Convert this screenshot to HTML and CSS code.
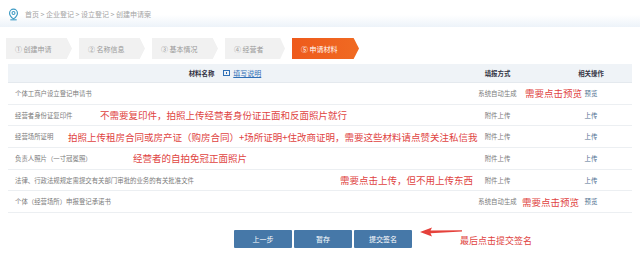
FILE: index.html
```html
<!DOCTYPE html>
<html lang="zh">
<head>
<meta charset="utf-8">
<link rel="stylesheet" href="styles.css">
</head>
<body>
<div class="crumb">
  <svg class="pin" viewBox="0 0 12 14" width="11" height="13"><path d="M6 1.2a4.3 4.3 0 0 0-4.3 4.3c0 3 4.3 6.3 4.3 6.3s4.3-3.3 4.3-6.3A4.3 4.3 0 0 0 6 1.2z" fill="none" stroke="#3f9bc4" stroke-width="1.3"/><circle cx="6" cy="5.4" r="1.6" fill="none" stroke="#3f9bc4" stroke-width="1.2"/><path d="M2.5 12.8h7" stroke="#3f9bc4" stroke-width="1.2"/></svg>
  <span>首页 &gt; 企业登记 &gt; 设立登记 &gt; 创建申请案</span>
</div>

<div class="steps">
  <div class="step">① 创建申请</div>
  <div class="step">② 名称信息</div>
  <div class="step">③ 基本情况</div>
  <div class="step short">④ 经营者</div>
  <div class="step active">⑤ 申请材料</div>
</div>

<div class="table">
  <div class="row head">
    <div class="c1"><b>材料名称</b><a class="help"><span class="hicon"></span>填写说明</a></div>
    <div class="c2"><b>填报方式</b></div>
    <div class="c3"><b>相关操作</b></div>
  </div>
  <div class="row">
    <div class="c1">个体工商户设立登记申请书</div>
    <div class="c2">系统自动生成</div>
    <div class="c3 op">预览</div>
    <span class="note n1">需要点击预览</span>
  </div>
  <div class="row">
    <div class="c1">经营者身份证复印件</div>
    <div class="c2">附件上传</div>
    <div class="c3 op">上传</div>
    <span class="note n2">不需要复印件，拍照上传经营者身份证正面和反面照片就行</span>
  </div>
  <div class="row">
    <div class="c1">经营场所证明</div>
    <div class="c2">附件上传</div>
    <div class="c3 op">上传</div>
    <span class="note n3">拍照上传租房合同或房产证（购房合同）+场所证明+住改商证明，需要这些材料请点赞关注私信我</span>
  </div>
  <div class="row">
    <div class="c1">负责人照片（一寸冠冕照）</div>
    <div class="c2">附件上传</div>
    <div class="c3 op">上传</div>
    <span class="note n4">经营者的自拍免冠正面照片</span>
  </div>
  <div class="row">
    <div class="c1">法律、行政法规规定需提交有关部门审批的业务的有关批准文件</div>
    <div class="c2">附件上传</div>
    <div class="c3 op">上传</div>
    <span class="note n5">需要点击上传，但不用上传东西</span>
  </div>
  <div class="row">
    <div class="c1">个体（经营场所）申报登记承诺书</div>
    <div class="c2">系统自动生成</div>
    <div class="c3 op">预览</div>
    <span class="note n6">需要点击预览</span>
  </div>
</div>

<div class="actions">
  <button class="btn">上一步</button>
  <button class="btn">暂存</button>
  <button class="btn">提交签名</button>
  <svg class="arrow" viewBox="0 0 42 10" width="42" height="10"><path d="M0 5 L12 0.5 L10.5 3.6 L42 3.2 L42 4.6 L10.5 6.2 L12 9.5 Z" fill="#e5413b"/></svg>
  <span class="anote">最后点击提交签名</span>
</div>
</body>
</html>
```

FILE: styles.css
```css
* { box-sizing: border-box; }
body {
  margin: 0;
  background: #fff;
  font-family: "Noto Sans CJK SC", "Noto Sans", sans-serif;
  color: #777;
}
.crumb {
  height: 27px;
  display: flex;
  align-items: center;
  gap: 6px;
  padding-left: 8px;
  background: linear-gradient(#ffffff 0%, #ffffff 55%, #edf3f9 100%);
  font-size: 7px;
  color: #a3a3a3;
}
.pin { display: block; margin-top: 1px; }
.steps {
  display: flex;
  gap: 7px;
  padding: 11px 0 0 6px;
  height: 32px;
}
.step {
  width: 66px;
  height: 21px;
  background: #f1f1f1;
  clip-path: polygon(0 0, 92% 0, 100% 50%, 92% 100%, 0 100%);
  font-size: 7px;
  color: #9a9a9a;
  display: flex;
  align-items: center;
  padding-left: 9px;
}
.step.short { width: 60px; }
.step.active {
  width: 67px;
  background: linear-gradient(90deg, #ee5a1c, #f06a22);
  color: #fff;
}
.table {
  margin: 5px 8px 0 8px;
}
.row {
  position: relative;
  display: grid;
  grid-template-columns: 442px 95px 1fr;
  height: 21.7px;
  align-items: center;
  border-bottom: 1px solid #eceff2;
  font-size: 6.4px;
  color: #7a7a7a;
}
.row.head {
  height: 19px;
  background: #eff3f7;
  border-bottom: 1px solid #e4e9ee;
  color: #334;
}
.row.head b { font-weight: 700; }
.row.head .c1 { justify-content: center; gap: 9px; padding-left: 0; padding-right: 8px; }
.c1 { padding-left: 7px; display: flex; align-items: center; }
.c2, .c3 { text-align: center; }
.c3 { padding-left: 5px; }
.op { color: #4e6f90; }
.help {
  color: #2f6fb6;
  text-decoration: underline;
  display: flex;
  align-items: center;
  gap: 3px;
  font-size: 7px;
}
.hicon {
  width: 7px;
  height: 6px;
  border: 1px solid #2f6fb6;
  position: relative;
}
.hicon::after {
  content: "";
  position: absolute;
  left: 2px;
  top: 1px;
  width: 1px;
  height: 2px;
  background: #2f6fb6;
}
.note {
  position: absolute;
  top: 50%;
  transform: translateY(-52%);
  font-size: 9.5px;
  color: #e0433f;
  white-space: nowrap;
}
.n1 { left: 517px; }
.n2 { left: 92px; }
.n3 { left: 60px; }
.n4 { left: 125px; }
.n5 { left: 332px; }
.n6 { left: 514px; }
.actions {
  position: relative;
  display: flex;
  justify-content: center;
  gap: 2px;
  padding-left: 6px;
  margin-top: 17px;
}
.btn {
  width: 58px;
  height: 18px;
  border: 0;
  border-radius: 1px;
  background: #4678a8;
  color: #fff;
  font-family: inherit;
  font-size: 7px;
  padding: 0;
}
.arrow {
  position: absolute;
  left: 420px;
  top: -3px;
}
.anote {
  position: absolute;
  left: 460px;
  top: 4px;
  font-size: 9px;
  color: #e0433f;
  white-space: nowrap;
}
```
